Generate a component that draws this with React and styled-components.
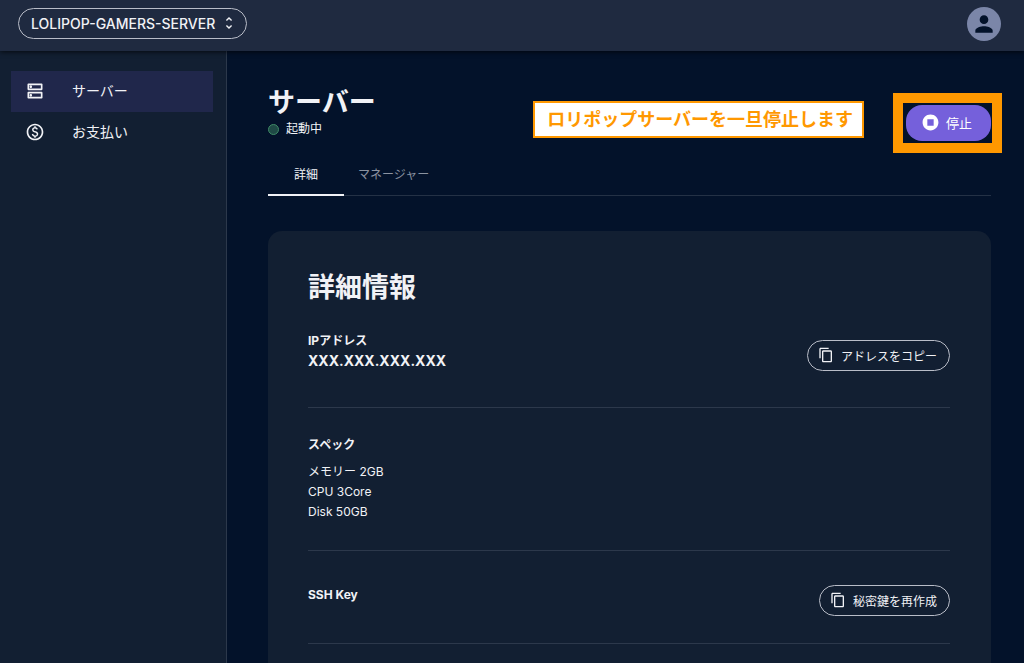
import React from 'react';
import styled, { createGlobalStyle } from 'styled-components';
import {
  MdContentCopy,
  MdOutlineDns,
  MdOutlinePaid,
  MdPerson,
  MdStopCircle,
  MdUnfoldMore,
} from 'react-icons/md';

const GlobalStyle = createGlobalStyle`
  * {
    box-sizing: border-box;
  }

  body {
    margin: 0;
    background: #03122a;
    color: #f1f2f6;
    font-family: Inter, 'Noto Sans CJK JP', sans-serif;
    font-size: 12px;
    line-height: 20px;
  }

  button {
    font-family: inherit;
    cursor: pointer;
  }
`;

const Page = styled.div`
  height: 100vh;
  display: flex;
  flex-direction: column;
`;

const TopBar = styled.header`
  display: flex;
  flex: none;
  justify-content: space-between;
  align-items: center;
  height: 51px;
  padding: 0 23px 4px 18px;
  background: #1f2a40;
  box-shadow: 0 1px 5px rgba(0, 0, 0, 0.7);
  z-index: 1;
`;

const ProjectButton = styled.button`
  display: flex;
  align-items: center;
  gap: 6px;
  height: 31px;
  padding: 0 9px 1px 12px;
  background: transparent;
  border: 1px solid #b9bdc8;
  border-radius: 16px;
  color: #f1f2f6;
  font-size: 14px;
  font-weight: 500;
`;

const Avatar = styled.button`
  display: grid;
  place-items: center;
  width: 34px;
  height: 34px;
  padding: 0;
  border: 0;
  border-radius: 50%;
  background: #7b86a8;
  color: #03122a;
`;

const Body = styled.div`
  display: flex;
  flex: 1;
  min-height: 0;
`;

const Sidebar = styled.nav`
  flex: none;
  width: 227px;
  padding: 20px 13px 0 11px;
  background: #121f32;
  border-right: 1px solid #2c384b;
`;

const NavLink = styled.a`
  display: flex;
  align-items: center;
  gap: 27px;
  height: 41px;
  padding: 0 0 1px 14px;
  background: ${({ $active }) => ($active ? '#20274b' : 'transparent')};
  color: #f1f2f6;
  font-size: 14px;
  text-decoration: none;
`;

const Main = styled.main`
  flex: 1;
  min-width: 0;
  padding: 35px 33px 0 41px;
  overflow-y: auto;
  scrollbar-width: none;
`;

const PageHeader = styled.div`
  position: relative;
  display: flex;
  justify-content: space-between;
  align-items: flex-start;
`;

const PageTitle = styled.h1`
  margin: 0;
  font-size: 27px;
  line-height: 33px;
`;

const Status = styled.p`
  display: flex;
  align-items: center;
  gap: 7px;
  margin: 0;
`;

const StatusDot = styled.span`
  width: 11px;
  height: 11px;
  border: 1px solid #3f8a66;
  border-radius: 50%;
  background: #1f4a46;
`;

const Note = styled.div`
  position: absolute;
  top: 15px;
  right: 127px;
  padding: 4px 9px 4px 12px;
  background: white;
  border: 2px solid #ff9800;
  color: #ff9800;
  font-size: 18px;
  font-weight: 600;
  line-height: 25px;
  white-space: nowrap;
`;

const StopArea = styled.div`
  position: relative;
  margin-top: 19px;
`;

const StopFrame = styled.span`
  position: absolute;
  inset: -12px -11px -12px -13px;
  border: 10px solid #ff9800;
  pointer-events: none;
`;

const StopButton = styled.button`
  display: flex;
  align-items: center;
  gap: 6px;
  height: 36px;
  padding: 0 19px 2px 15px;
  border: 0;
  border-radius: 16px;
  background: #7560db;
  color: white;
  font-size: 13px;
`;

const Tabs = styled.div`
  display: flex;
  margin-top: 13px;
  border-bottom: 1px solid #243145;
`;

const Tab = styled.button`
  height: 42px;
  margin-bottom: -1px;
  padding: 0 ${({ $active }) => ($active ? '26px' : '14px')} 2px;
  background: transparent;
  border: 0;
  border-bottom: 2px solid ${({ $active }) => ($active ? '#f1f2f6' : 'transparent')};
  color: ${({ $active }) => ($active ? '#f1f2f6' : '#8b93a1')};
  font-size: 12px;
`;

const Card = styled.section`
  margin-top: 35px;
  padding: 40px 41px 40px 40px;
  border-radius: 14px;
  background: #121f32;
`;

const CardTitle = styled.h2`
  margin: 0;
  font-size: 27px;
  line-height: 34px;
`;

const Row = styled.div`
  display: flex;
  justify-content: space-between;
  align-items: ${({ $align }) => $align || 'flex-start'};
  padding: ${({ $padding }) => $padding};
  border-bottom: 1px solid #2c384b;
`;

const Label = styled.h3`
  margin: 0;
  font-size: 12px;
  font-weight: 700;
`;

const Address = styled.p`
  margin: 0;
  font-size: 14px;
  font-weight: 700;
`;

const SpecList = styled.ul`
  margin: 7px 0 0;
  padding: 0;
  list-style: none;
`;

const OutlineButton = styled.button`
  display: flex;
  align-items: center;
  gap: 7px;
  height: 31px;
  padding: 0 12px 1px 10px;
  background: transparent;
  border: 1px solid #b9bdc8;
  border-radius: 16px;
  color: #f1f2f6;
  font-size: 12px;
`;

const specs = ['メモリー 2GB', 'CPU 3Core', 'Disk 50GB'];

const App = () => {
  return (
    <Page>
      <GlobalStyle />
      <TopBar>
        <ProjectButton>
          LOLIPOP-GAMERS-SERVER
          <MdUnfoldMore size={16} />
        </ProjectButton>
        <Avatar aria-label='アカウント'>
          <MdPerson size={26} />
        </Avatar>
      </TopBar>
      <Body>
        <Sidebar>
          <NavLink href='#server' $active>
            <MdOutlineDns size={20} />
            サーバー
          </NavLink>
          <NavLink href='#payment'>
            <MdOutlinePaid size={20} />
            お支払い
          </NavLink>
        </Sidebar>
        <Main>
          <PageHeader>
            <div>
              <PageTitle>サーバー</PageTitle>
              <Status>
                <StatusDot />
                起動中
              </Status>
            </div>
            <Note>ロリポップサーバーを一旦停止します</Note>
            <StopArea>
              <StopButton>
                <MdStopCircle size={19} />
                停止
              </StopButton>
              <StopFrame />
            </StopArea>
          </PageHeader>
          <Tabs role='tablist'>
            <Tab role='tab' aria-selected='true' $active>詳細</Tab>
            <Tab role='tab' aria-selected='false'>マネージャー</Tab>
          </Tabs>
          <Card>
            <CardTitle>詳細情報</CardTitle>
            <Row $padding='26px 0 36px' $align='flex-end'>
              <div>
                <Label>IPアドレス</Label>
                <Address>XXX.XXX.XXX.XXX</Address>
              </div>
              <OutlineButton>
                <MdContentCopy size={16} />
                アドレスをコピー
              </OutlineButton>
            </Row>
            <Row $padding='27px 0 28px'>
              <div>
                <Label>スペック</Label>
                <SpecList>
                  {specs.map((spec) => (
                    <li key={spec}>{spec}</li>
                  ))}
                </SpecList>
              </div>
            </Row>
            <Row $padding='34px 0 27px'>
              <Label>SSH Key</Label>
              <OutlineButton>
                <MdContentCopy size={16} />
                秘密鍵を再作成
              </OutlineButton>
            </Row>
          </Card>
        </Main>
      </Body>
    </Page>
  );
};

export default App;
